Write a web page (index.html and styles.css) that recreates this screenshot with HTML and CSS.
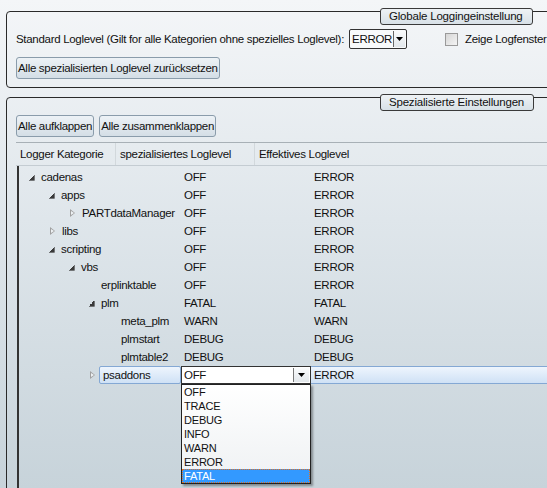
FILE: index.html
```html
<!DOCTYPE html>
<html lang="de">
<head>
<meta charset="UTF-8">
<title>Loglevel Einstellungen</title>
<link rel="stylesheet" href="styles.css">
</head>
<body>

<div class="group group-global">
  <div class="group-title">Globale Loggingeinstellung</div>
  <div class="global-row">
    <span class="label">Standard Loglevel (Gilt for alle Kategorien ohne spezielles Loglevel):</span>
    <div class="combo">
      <span class="combo-text">ERROR</span>
      <span class="combo-btn"><svg width="7" height="4" viewBox="0 0 7 4"><polygon points="0,0 7,0 3.5,4" fill="#000"/></svg></span>
    </div>
    <span class="check"></span>
    <span class="check-label">Zeige Logfenster bei Fehlern</span>
  </div>
  <div class="btn-row">
    <button class="btn">Alle spezialisierten Loglevel zurücksetzen</button>
  </div>
</div>

<div class="group group-special">
  <div class="group-title">Spezialisierte Einstellungen</div>
  <div class="btn-row">
    <button class="btn">Alle aufklappen</button>
    <button class="btn">Alle zusammenklappen</button>
  </div>

  <div class="table">
    <div class="table-head">
      <div class="th th-cat">Logger Kategorie</div>
      <div class="th th-level">spezialisiertes Loglevel</div>
      <div class="th th-eff">Effektives Loglevel</div>
    </div>

    <div class="table-body">
      <div class="tr">
        <div class="td-cat lvl0"><span class="exp open"></span><span class="name">cadenas</span></div>
        <div class="td">OFF</div><div class="td">ERROR</div>
      </div>
      <div class="tr">
        <div class="td-cat lvl1"><span class="exp open"></span><span class="name">apps</span></div>
        <div class="td">OFF</div><div class="td">ERROR</div>
      </div>
      <div class="tr">
        <div class="td-cat lvl2"><span class="exp closed"></span><span class="name">PARTdataManager</span></div>
        <div class="td">OFF</div><div class="td">ERROR</div>
      </div>
      <div class="tr">
        <div class="td-cat lvl1"><span class="exp closed"></span><span class="name">libs</span></div>
        <div class="td">OFF</div><div class="td">ERROR</div>
      </div>
      <div class="tr">
        <div class="td-cat lvl1"><span class="exp open"></span><span class="name">scripting</span></div>
        <div class="td">OFF</div><div class="td">ERROR</div>
      </div>
      <div class="tr">
        <div class="td-cat lvl2"><span class="exp open"></span><span class="name">vbs</span></div>
        <div class="td">OFF</div><div class="td">ERROR</div>
      </div>
      <div class="tr">
        <div class="td-cat lvl3"><span class="exp"></span><span class="name">erplinktable</span></div>
        <div class="td">OFF</div><div class="td">ERROR</div>
      </div>
      <div class="tr">
        <div class="td-cat lvl3"><span class="exp open"></span><span class="name">plm</span></div>
        <div class="td">FATAL</div><div class="td">FATAL</div>
      </div>
      <div class="tr">
        <div class="td-cat lvl4"><span class="exp"></span><span class="name">meta_plm</span></div>
        <div class="td">WARN</div><div class="td">WARN</div>
      </div>
      <div class="tr">
        <div class="td-cat lvl4"><span class="exp"></span><span class="name">plmstart</span></div>
        <div class="td">DEBUG</div><div class="td">DEBUG</div>
      </div>
      <div class="tr">
        <div class="td-cat lvl4"><span class="exp"></span><span class="name">plmtable2</span></div>
        <div class="td">DEBUG</div><div class="td">DEBUG</div>
      </div>
      <div class="tr selected">
        <div class="td-cat lvl3"><span class="exp closed"></span><span class="name sel-name">psaddons</span></div>
        <div class="td editor">
          <div class="cell-combo">
            <span class="combo-text">OFF</span>
            <span class="combo-btn"><svg width="7" height="4" viewBox="0 0 7 4"><polygon points="0,0 7,0 3.5,4" fill="#000"/></svg></span>
          </div>
          <ul class="popup">
            <li>OFF</li>
            <li>TRACE</li>
            <li>DEBUG</li>
            <li>INFO</li>
            <li>WARN</li>
            <li>ERROR</li>
            <li class="active">FATAL</li>
          </ul>
        </div>
        <div class="td sel-eff">ERROR</div>
      </div>
    </div>
  </div>
</div>

</body>
</html>
```

FILE: styles.css
```css
html, body {
  height: 100%;
}

body {
  margin: 0;
  overflow: hidden;
  font-family: "Liberation Sans", Arial, sans-serif;
  font-size: 11.5px;
  letter-spacing: -0.3px;
  color: #111;
  background: linear-gradient(to bottom, #f4f6f8 0%, #dfe6eb 45%, #c7d3da 100%);
}

.group {
  position: relative;
  border: 1px solid #2a2a2a;
  border-radius: 4px;
  margin-left: 6px;
  margin-right: -20px;
}

.group-global {
  margin-top: 11px;
  height: 75px;
}

.group-special {
  margin-top: 9px;
  height: 420px;
}

.group-title {
  position: absolute;
  top: -4px;
  left: 373px;
  height: 15px;
  line-height: 15px;
  padding: 0 9px 0 8px;
  font-size: 11.5px;
  letter-spacing: -0.2px;
  border: 1px solid #3a3a3a;
  border-radius: 3px;
  background: linear-gradient(to bottom, #eef2f5, #d8e1e7);
  white-space: nowrap;
}

.global-row {
  display: flex;
  align-items: center;
  height: 20px;
  margin-top: 17px;
  padding-left: 9px;
  white-space: nowrap;
}

.global-row > * {
  flex: none;
}

.label {
  margin-right: 5px;
}

.combo {
  display: flex;
  width: 56px;
  height: 18px;
  border: 1px solid #333;
  border-radius: 2px;
  background: #f8fafb;
}

.combo-text {
  flex: 1;
  line-height: 18px;
  padding-left: 2px;
}

.combo-btn {
  display: flex;
  align-items: center;
  justify-content: center;
  width: 15px;
  margin: 1px;
  border-left: 1px solid #666;
  background: linear-gradient(to bottom, #fafbfc, #e2e7eb);
}

.check {
  width: 11px;
  height: 11px;
  margin-left: 38px;
  border: 1px solid #9a9a9a;
  background: linear-gradient(to bottom right, #d6d6d6, #f4f4f4);
}

.check-label {
  margin-left: 7px;
}

.btn-row {
  display: flex;
  gap: 5px;
  padding-left: 9px;
}

.group-global .btn-row {
  margin-top: 8px;
}

.group-special .btn-row {
  margin-top: 17px;
}

.btn {
  height: 22px;
  padding: 0 1px;
  font-family: inherit;
  font-size: 11.5px;
  letter-spacing: -0.3px;
  color: #111;
  border: 1px solid #8a9cab;
  border-radius: 3px;
  background: linear-gradient(to bottom, #edf2f6, #d4dee6);
}

/* tree table */
.table {
  margin-top: 5px;
  margin-left: 9px;
}

.table-head {
  display: grid;
  grid-template-columns: 100px 139px 1fr;
  height: 22px;
  border-top: 1px solid #a8b0b6;
  border-bottom: 1px solid #c4ccd2;
}

.th {
  line-height: 22px;
  padding-left: 4px;
  border-right: 1px solid #d2d8dc;
  white-space: nowrap;
}

.table-body {
  border-left: 2px solid #333;
  margin-left: 1px;
  padding-top: 2px;
  height: 330px;
}

.tr {
  display: grid;
  grid-template-columns: 162px 130px 1fr;
  height: 18px;
  line-height: 18px;
}

.td {
  padding-left: 3px;
}

.td-cat {
  display: flex;
  align-items: center;
  white-space: nowrap;
}

.lvl0 { padding-left: 8px; }
.lvl1 { padding-left: 28px; }
.lvl2 { padding-left: 48px; }
.lvl3 { padding-left: 68px; }
.lvl4 { padding-left: 88px; }

.exp {
  width: 9px;
  height: 9px;
  margin-right: 5px;
  flex: none;
}

.exp.open {
  background: linear-gradient(to bottom right, transparent 50%, #3a3a3a 50%);
  transform: scale(0.7);
}

.exp.closed {
  width: 0;
  height: 0;
  margin: 0 7px 0 3px;
  border-style: solid;
  border-width: 4.5px 0 4.5px 5px;
  border-color: transparent transparent transparent #a0a0a0;
  position: relative;
}

.exp.closed::after {
  content: "";
  position: absolute;
  left: -4px;
  top: -2.5px;
  border-style: solid;
  border-width: 2.5px 0 2.5px 3px;
  border-color: transparent transparent transparent #eef2f5;
}

.selected .sel-name {
  margin-left: -3px;
  padding: 0 3px;
  flex: 1;
  height: 16px;
  line-height: 16px;
  border: 1px solid #84a8d4;
  border-radius: 2px;
  background: linear-gradient(to bottom, #eef5fd, #cfe1f5);
}

.editor {
  position: relative;
  padding: 0;
}

.cell-combo {
  display: flex;
  height: 16px;
  border: 1px solid #333;
  background: #fff;
}

.cell-combo .combo-text {
  line-height: 16px;
}

.cell-combo .combo-btn {
  border-left: 1px solid #777;
}

.sel-eff {
  height: 16px;
  line-height: 16px;
  border-top: 1px solid #84a8d4;
  border-bottom: 1px solid #84a8d4;
  background: linear-gradient(to bottom, #eef5fd, #cfe1f5);
}

.popup {
  position: absolute;
  top: 18px;
  left: 0;
  width: 128px;
  margin: 0;
  padding: 0;
  list-style: none;
  font-size: 11px;
  letter-spacing: -0.2px;
  border: 1px solid #222;
  background: linear-gradient(to bottom, #ffffff, #eef1f3);
  box-shadow: 2px 2px 2px rgba(0, 0, 0, 0.35);
}

.popup li {
  height: 14px;
  line-height: 14px;
  padding-left: 2px;
}

.popup li.active {
  color: #fff;
  background: #3399ff;
  outline: 1px dotted #e07020;
  outline-offset: -1px;
}
```
